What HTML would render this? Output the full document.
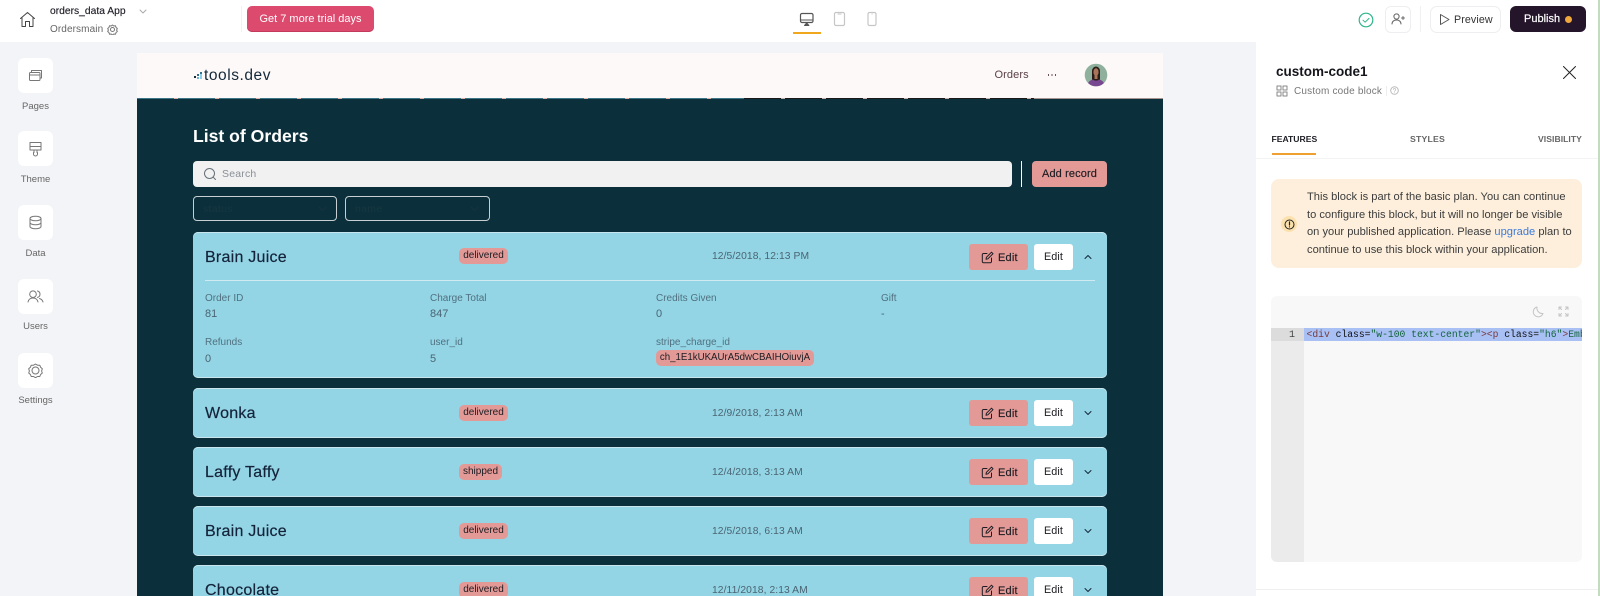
<!DOCTYPE html>
<html style="overflow:hidden"><head><meta charset="utf-8"><title>orders_data App</title>
<style>
html,body{margin:0;padding:0;width:1600px;height:596px;overflow:hidden}
body{position:relative;background:#f3f4f7;font-family:"Liberation Sans",sans-serif;color:#1a2230}
div,svg{position:absolute}
#root{left:0;top:0;width:1600px;height:596px;overflow:hidden;background:#f3f4f7}
.t{position:absolute;white-space:nowrap;line-height:16px;height:16px}
svg{fill:none;stroke:#555;stroke-width:1;stroke-linecap:round;stroke-linejoin:round}
.box{left:18px;width:35px;height:35px;background:#fff;border-radius:6px}
.lab{left:0;width:71px;text-align:center;font-size:9.5px;color:#666}
.card{left:193px;width:914px;height:50px;background:#93d5e5;border-radius:5px;box-shadow:inset 0 1px 0 #c9e6ee,inset 0 -1px 0 #c9e6ee}
.name{left:12px;top:18px;font-size:16px;letter-spacing:.25px;color:#14233a;-webkit-text-stroke:.2px #14233a}
.badge{top:17px;height:16px;background:#e39a97;border-radius:5px;font-size:10px;line-height:16px;color:#1c1c22;text-align:center;white-space:nowrap}
.date{top:18px;left:519px;font-size:10.3px;color:#4b6472;letter-spacing:.08px}
.b1{left:776px;top:12px;width:59px;height:26px;background:#e39a97;border-radius:3px}
.b1 span{position:absolute;left:29px;top:5.5px;font-size:11px;line-height:16px;letter-spacing:.2px;color:#1c1c22;-webkit-text-stroke:.15px #1c1c22}
.b2{left:841px;top:12px;width:39px;height:26px;background:#fff;border-radius:3px;text-align:center;font-size:10.8px;line-height:27px;letter-spacing:.1px;color:#1c1c22}
.k{font-size:10px;color:#51707f}
.v{font-size:11px;color:#4b6472}
.al{left:1307px;font-size:11.13px;color:#3c3c3c}
</style></head><body>
<div id="root">

<!-- top bar -->
<div style="left:0;top:0;width:1600px;height:41.5px;background:#fff"></div>
<svg style="left:19px;top:11px" width="17" height="17" viewBox="0 0 17 17"><path d="M1.5 7.5 8.5 1.5l7 6M3 6.5V15.5H6.5V10.5H10.5V15.5H14V6.5" stroke="#444"/></svg>
<div class="t" style="left:50px;top:4px;font-size:10.3px;color:#1f1f28;-webkit-text-stroke:.15px #1f1f28">orders_data App</div>
<svg style="left:139px;top:9px" width="8" height="5" viewBox="0 0 8 5"><path d="M1 1l3 3 3-3" stroke="#aaa"/></svg>
<div class="t" style="left:50px;top:22px;font-size:10px;color:#666;letter-spacing:.1px">Ordersmain</div>
<svg style="left:107px;top:24px" width="11" height="11" viewBox="0 0 11 11"><circle cx="5.5" cy="5.5" r="2" stroke="#777"/><path d="M5.5 1l1.3 1 1.7-.2.5 1.6 1.3 1.1-.7 1.5.7 1.5-1.3 1.1-.5 1.6-1.7-.2-1.3 1-1.3-1-1.7.2-.5-1.6L.7 7.5 1.4 6 .7 4.5 2 3.4l.5-1.6 1.7.2z" stroke="#777"/></svg>
<div style="left:241px;top:6px;width:1px;height:26px;background:#f2f2f2"></div>
<div class="t" style="left:247px;top:6px;width:127px;height:26px;background:#dc4a6e;border-radius:5px;box-shadow:inset 0 -1px 0 #c23a5c;color:#fff;font-size:11px;line-height:26px;text-align:center">Get 7 more trial days</div>

<svg style="left:799px;top:12px" width="16" height="15" viewBox="0 0 16 15"><rect x="1.5" y="1.5" width="12.5" height="9" rx="1.5" stroke="#555" stroke-width="1.2"/><path d="M1.5 8h12.500" stroke="#555"/><path d="M5.5 13.5l2.200-2.500 2.200 2.500z" fill="#555" stroke="#555"/></svg>
<div style="left:793px;top:32px;width:28px;height:1.5px;background:#f0a71e"></div>
<svg style="left:833px;top:11px" width="14" height="16" viewBox="0 0 14 16"><rect x="1.5" y="1.5" width="10" height="13" rx="1.5" stroke="#c6c6c6" stroke-width="1.2"/><path d="M5 3h3" stroke="#c6c6c6"/></svg>
<svg style="left:866px;top:11px" width="12" height="16" viewBox="0 0 12 16"><rect x="2" y="1.5" width="8" height="13" rx="1.5" stroke="#c6c6c6" stroke-width="1.2"/><path d="M6 3h.2" stroke="#c6c6c6"/></svg>

<svg style="left:1358px;top:11.5px" width="16" height="16" viewBox="0 0 16 16"><circle cx="8" cy="8" r="6.8" stroke="#2fb58a" stroke-width="1.2"/><path d="M5 8.200l2.100 2 3.900-3.800" stroke="#2fb58a"/></svg>
<div style="left:1385px;top:6px;width:24px;height:25px;border:1px solid #eeeef0;border-radius:6px"></div>
<svg style="left:1391px;top:13px" width="14" height="12" viewBox="0 0 14 12"><circle cx="5.5" cy="3.5" r="2.6" stroke="#666"/><path d="M1 11c0-2.500 2-4 4.500-4s4.500 1.500 4.500 4M10.500 5h3M12 3.500v3" stroke="#666"/></svg>
<div style="left:1420px;top:6px;width:1px;height:26px;background:#f0f0f0"></div>
<div style="left:1430px;top:6px;width:69px;height:25px;border:1px solid #eeeef0;border-radius:7px"></div>
<svg style="left:1439px;top:13px" width="12" height="13" viewBox="0 0 12 13"><path d="M1.5 1.500v10l8.500-5z" stroke="#555"/></svg>
<div class="t" style="left:1454px;top:11.5px;font-size:10.7px;color:#333;letter-spacing:.1px">Preview</div>
<div style="left:1510px;top:6px;width:76px;height:26px;background:#24152b;border-radius:6px"></div>
<div class="t" style="left:1524px;top:11px;font-size:11px;color:#fff;-webkit-text-stroke:.2px #fff">Publish</div>
<div style="left:1565px;top:16px;width:7px;height:7px;border-radius:50%;background:#f0a83c"></div>

<!-- left sidebar -->
<div class="box" style="top:58px"></div>
<svg style="left:28px;top:68px" width="15" height="15" viewBox="0 0 15 15"><rect x="1.5" y="4.500" width="10.500" height="8" rx="1" stroke="#777"/><path d="M1.500 7h10.500M3.500 4.500V2.500h10v7.500h-1.500" stroke="#777"/></svg>
<div class="t lab" style="top:98.5px">Pages</div>
<div class="box" style="top:131px"></div>
<svg style="left:28px;top:141px" width="15" height="16" viewBox="0 0 15 16"><path d="M2 1.500h11v7.500H2zM2 5.500h11M6 9v2.500h-.5V13a2 2 0 0 0 4 0v-1.500H9V9" stroke="#777"/></svg>
<div class="t lab" style="top:172px">Theme</div>
<div class="box" style="top:205px"></div>
<svg style="left:28px;top:215px" width="15" height="15" viewBox="0 0 15 15"><ellipse cx="7.500" cy="3.500" rx="5.500" ry="2.300" stroke="#777"/><path d="M2 3.500v8c0 1.300 2.500 2.300 5.500 2.300s5.500-1 5.500-2.300v-8M2 7.500c0 1.300 2.500 2.300 5.500 2.300s5.500-1 5.500-2.300" stroke="#777"/></svg>
<div class="t lab" style="top:246px">Data</div>
<div class="box" style="top:279px"></div>
<svg style="left:27px;top:290px" width="17" height="13" viewBox="0 0 17 13"><circle cx="6" cy="4.200" r="3.300" stroke="#777"/><path d="M1 12c.5-2.500 2.500-4 5-4s4.500 1.500 5 4M10.500 1a3.300 3.300 0 0 1 0 6.400M12.500 8.500c1.700.5 3 1.800 3.500 3.500" stroke="#777"/></svg>
<div class="t lab" style="top:319px">Users</div>
<div class="box" style="top:353px"></div>
<svg style="left:28px;top:363px" width="15" height="15" viewBox="0 0 15 15"><circle cx="7.500" cy="7.500" r="3.500" stroke="#777"/><path d="M7.500 1l2 1.200 2.300 0 .8 2.100 1.700 1.500-.7 2.200.7 2-1.700 1.500-.8 2-2.300 0-2 1.200-2-1.200-2.300 0-.8-2-1.700-1.500.7-2-.7-2.200 1.700-1.500.8-2.100 2.300 0z" stroke="#777"/></svg>
<div class="t lab" style="top:393px">Settings</div>

<!-- canvas -->
<div style="left:137px;top:53px;width:1026px;height:543px;background:#0b303c"></div>
<div style="left:137px;top:53px;width:1026px;height:45px;background:#fdf9f8"></div>
<div style="left:137px;top:97.7px;width:1026px;height:1px;background:repeating-linear-gradient(90deg,#3c7585 0 37px,#e0b0a8 37px 41px)"></div>
<div style="left:744px;top:97.7px;width:290px;height:1px;background:repeating-linear-gradient(90deg,#1a1a1a 0 37px,#c8b0aa 37px 41px)"></div>
<div style="left:1034px;top:97.7px;width:129px;height:1px;background:#a89490"></div>
<div style="left:193.5px;top:76px;width:2px;height:2px;background:#14283a"></div>
<div style="left:197px;top:74px;width:2px;height:2px;background:#2e6f92"></div>
<div style="left:197px;top:76.5px;width:2px;height:2px;background:#6ab6d6"></div>
<div style="left:200px;top:71.5px;width:2px;height:2px;background:#2e6f92"></div>
<div style="left:200px;top:74px;width:2px;height:4.5px;background:#8bd0e8"></div>
<div class="t" style="left:204px;top:67.5px;font-size:15.5px;color:#14283a;letter-spacing:.55px">tools.dev</div>
<div class="t" style="left:994.5px;top:67px;font-size:11px;color:#5a4048;letter-spacing:.1px">Orders</div>
<div style="left:1047.5px;top:74px;width:1.5px;height:1.5px;background:#6a5058;box-shadow:3.5px 0 #6a5058,7px 0 #6a5058"></div>
<svg style="left:1084px;top:63px;stroke:none" width="24" height="24" viewBox="0 0 24 24"><defs><clipPath id="av"><circle cx="12" cy="12" r="11.3"/></clipPath></defs><g clip-path="url(#av)" stroke="none"><rect width="24" height="24" fill="#8fb09c"/><path d="M8 18V8a4 4.500 0 0 1 8 0v10z" fill="#2a1d18"/><ellipse cx="12" cy="9" rx="2.600" ry="3.800" fill="#a9745a"/><path d="M10.500 12h3v4h-3z" fill="#a9745a"/><path d="M3 24c0-4 3-7 6-7.500 1 1.500 5 1.500 6 0 3 .5 6 3.500 6 7.500z" fill="#77488f"/></g></svg>

<div class="t" style="left:193px;top:126px;height:20px;line-height:20px;font-size:17.6px;font-weight:bold;color:#fff">List of Orders</div>
<div style="left:193px;top:161px;width:819px;height:26px;background:#f1f1f1;border-radius:4px"></div>
<svg style="left:203px;top:167px" width="14" height="14" viewBox="0 0 14 14"><circle cx="6.500" cy="6.500" r="5" stroke="#66707a"/><path d="M10.200 10.200l2.300 2.300" stroke="#66707a"/></svg>
<div class="t" style="left:222px;top:166px;font-size:10.5px;color:#8a8f96;letter-spacing:.2px">Search</div>
<div style="left:1021px;top:161px;width:1px;height:26px;background:#fff"></div>
<div class="t" style="left:1032px;top:161px;width:75px;height:26px;background:#e39a97;border-radius:4px;font-size:11px;line-height:26px;letter-spacing:.12px;text-align:center;color:#1c1c22;-webkit-text-stroke:.15px #1c1c22">Add record</div>
<div style="left:193px;top:196px;width:142px;height:23px;border:1px solid #c7cfd2;border-radius:4px"></div>
<div class="t" style="left:203px;top:201px;font-size:10.5px;color:#173640;letter-spacing:.3px">status</div>
<svg style="left:318px;top:206px" width="9" height="6" viewBox="0 0 9 6"><path d="M1 1l3.500 3.500L8 1" stroke="#16333e"/></svg>
<div style="left:345px;top:196px;width:143px;height:23px;border:1px solid #c7cfd2;border-radius:4px"></div>
<div class="t" style="left:355px;top:201px;font-size:10.5px;color:#173640;letter-spacing:.3px">name</div>
<svg style="left:470px;top:206px" width="9" height="6" viewBox="0 0 9 6"><path d="M1 1l3.500 3.500L8 1" stroke="#16333e"/></svg>

<!-- card 1 -->
<div class="card" style="top:232px;height:146px">
  <div class="t name" style="top:17.5px">Brain Juice</div>
  <div class="badge" style="left:266px;width:49px;top:16px">delivered</div>
  <div class="t date" style="top:17px">12/5/2018, 12:13 PM</div>
  <div class="b1"><svg style="left:12px;top:7px" width="13" height="13" viewBox="0 0 13 13"><path d="M6 2.500H2.500a1.200 1.200 0 0 0-1.200 1.200v6.800a1.200 1.200 0 0 0 1.200 1.200h6.800a1.200 1.200 0 0 0 1.200-1.200V7M5 8.300l.4-2L10.500 1.200l1.500 1.500L6.900 7.800z" stroke="#1c1c22"/></svg><span>Edit</span></div>
  <div class="b2">Edit</div>
  <svg style="left:891px;top:22px" width="8" height="6" viewBox="0 0 8 6"><path d="M1 4.500l3-3 3 3" stroke="#14283a"/></svg>
  <div style="left:12px;top:47.5px;width:890px;height:1px;background:#cfeaf1"></div>
  <div class="t k" style="left:12px;top:58.5px">Order ID</div><div class="t v" style="left:12px;top:74px">81</div>
  <div class="t k" style="left:237px;top:58.5px">Charge Total</div><div class="t v" style="left:237px;top:74px">847</div>
  <div class="t k" style="left:463px;top:58.5px">Credits Given</div><div class="t v" style="left:463px;top:74px">0</div>
  <div class="t k" style="left:688px;top:58.5px">Gift</div><div class="t v" style="left:688px;top:74px">-</div>
  <div class="t k" style="left:12px;top:103px">Refunds</div><div class="t v" style="left:12px;top:119px">0</div>
  <div class="t k" style="left:237px;top:103px">user_id</div><div class="t v" style="left:237px;top:119px">5</div>
  <div class="t k" style="left:463px;top:103px">stripe_charge_id</div>
  <div class="badge" style="left:463px;top:118px;width:158px;font-size:9.7px">ch_1E1kUKAUrA5dwCBAIHOiuvjA</div>
</div>

<!-- card 2 -->
<div class="card" style="top:388px">
  <div class="t name">Wonka</div>
  <div class="badge" style="left:266px;width:49px">delivered</div>
  <div class="t date">12/9/2018, 2:13 AM</div>
  <div class="b1"><svg style="left:12px;top:7px" width="13" height="13" viewBox="0 0 13 13"><path d="M6 2.500H2.500a1.200 1.200 0 0 0-1.200 1.200v6.800a1.200 1.200 0 0 0 1.200 1.200h6.800a1.200 1.200 0 0 0 1.200-1.200V7M5 8.300l.4-2L10.500 1.200l1.500 1.500L6.900 7.800z" stroke="#1c1c22"/></svg><span>Edit</span></div>
  <div class="b2">Edit</div>
  <svg style="left:891px;top:22px" width="8" height="6" viewBox="0 0 8 6"><path d="M1 1.500l3 3 3-3" stroke="#14283a"/></svg>
</div>

<!-- card 3 -->
<div class="card" style="top:447px">
  <div class="t name">Laffy Taffy</div>
  <div class="badge" style="left:266px;width:43px">shipped</div>
  <div class="t date">12/4/2018, 3:13 AM</div>
  <div class="b1"><svg style="left:12px;top:7px" width="13" height="13" viewBox="0 0 13 13"><path d="M6 2.500H2.500a1.200 1.200 0 0 0-1.200 1.200v6.800a1.200 1.200 0 0 0 1.200 1.200h6.800a1.200 1.200 0 0 0 1.200-1.200V7M5 8.300l.4-2L10.500 1.200l1.500 1.500L6.900 7.800z" stroke="#1c1c22"/></svg><span>Edit</span></div>
  <div class="b2">Edit</div>
  <svg style="left:891px;top:22px" width="8" height="6" viewBox="0 0 8 6"><path d="M1 1.500l3 3 3-3" stroke="#14283a"/></svg>
</div>

<!-- card 4 -->
<div class="card" style="top:506px">
  <div class="t name">Brain Juice</div>
  <div class="badge" style="left:266px;width:49px">delivered</div>
  <div class="t date">12/5/2018, 6:13 AM</div>
  <div class="b1"><svg style="left:12px;top:7px" width="13" height="13" viewBox="0 0 13 13"><path d="M6 2.500H2.500a1.200 1.200 0 0 0-1.200 1.200v6.800a1.200 1.200 0 0 0 1.200 1.200h6.800a1.200 1.200 0 0 0 1.200-1.200V7M5 8.300l.4-2L10.500 1.200l1.500 1.500L6.900 7.800z" stroke="#1c1c22"/></svg><span>Edit</span></div>
  <div class="b2">Edit</div>
  <svg style="left:891px;top:22px" width="8" height="6" viewBox="0 0 8 6"><path d="M1 1.500l3 3 3-3" stroke="#14283a"/></svg>
</div>

<!-- card 5 -->
<div class="card" style="top:565px">
  <div class="t name">Chocolate</div>
  <div class="badge" style="left:266px;width:49px">delivered</div>
  <div class="t date">12/11/2018, 2:13 AM</div>
  <div class="b1"><svg style="left:12px;top:7px" width="13" height="13" viewBox="0 0 13 13"><path d="M6 2.500H2.500a1.200 1.200 0 0 0-1.200 1.200v6.800a1.200 1.200 0 0 0 1.200 1.200h6.800a1.200 1.200 0 0 0 1.200-1.200V7M5 8.300l.4-2L10.500 1.200l1.500 1.500L6.900 7.800z" stroke="#1c1c22"/></svg><span>Edit</span></div>
  <div class="b2">Edit</div>
  <svg style="left:891px;top:22px" width="8" height="6" viewBox="0 0 8 6"><path d="M1 1.500l3 3 3-3" stroke="#14283a"/></svg>
</div>

<!-- right panel -->
<div style="left:1256px;top:41.5px;width:342px;height:555px;background:#fff"></div>
<div style="left:1598px;top:0;width:2px;height:596px;background:#c3dcc0"></div>
<div class="t" style="left:1276px;top:64px;font-size:13.5px;font-weight:bold;color:#15151c">custom-code1</div>
<svg style="left:1276px;top:85px" width="12" height="12" viewBox="0 0 12 12"><path d="M1 1h4v4H1zM7 1h4v4H7zM1 7h4v4H1zM7 7h4v4H7z" stroke="#888"/></svg>
<div class="t" style="left:1294px;top:83.5px;font-size:10px;color:#777;letter-spacing:.18px">Custom code block</div>
<div style="left:1386px;top:86px;width:1px;height:10px;background:#eee"></div>
<svg style="left:1390px;top:86px" width="9" height="9" viewBox="0 0 9 9"><circle cx="4.500" cy="4.500" r="3.800" stroke="#bbb"/><path d="M3.300 3.600a1.200 1.200 0 1 1 1.700 1.100L4.500 5.400M4.500 6.500v.1" stroke="#bbb" stroke-width=".7"/></svg>
<svg style="left:1562px;top:65px" width="15" height="15" viewBox="0 0 15 15"><path d="M1.500 1.500l12 12M13.500 1.500l-12 12" stroke="#222"/></svg>
<div class="t" style="left:1271.5px;top:131px;font-size:8.6px;font-weight:bold;color:#1d1d24">FEATURES</div>
<div class="t" style="left:1410px;top:131px;font-size:8.7px;font-weight:bold;color:#666;letter-spacing:.2px">STYLES</div>
<div class="t" style="left:1538px;top:131px;font-size:8.6px;font-weight:bold;color:#666;letter-spacing:.05px">VISIBILITY</div>
<div style="left:1256px;top:158px;width:342px;height:1px;background:#f3f3f4"></div>
<div style="left:1272px;top:153px;width:44px;height:2px;background:#f0a030"></div>

<div style="left:1271px;top:179px;width:311px;height:89px;background:#fdefdc;border-radius:8px"></div>
<div style="left:1281px;top:216px;width:16px;height:16px;border-radius:50%;background:#fbe1ad"></div>
<svg style="left:1283.5px;top:218.5px" width="11" height="11" viewBox="0 0 11 11"><circle cx="5.500" cy="5.500" r="4.500" stroke="#222"/><path d="M5.500 3v3M5.500 7.800v.1" stroke="#222" stroke-width="1.2"/></svg>
<div class="t al" style="top:189px">This block is part of the basic plan. You can continue</div>
<div class="t al" style="top:207px">to configure this block, but it will no longer be visible</div>
<div class="t al" style="top:224px">on your published application. Please <span style="color:#3b7ad9">upgrade</span> plan to</div>
<div class="t al" style="top:242px">continue to use this block within your application.</div>

<div style="left:1271px;top:296px;width:311px;height:266px;background:#f8f8f8;border-radius:6px;overflow:hidden">
  <div style="left:0;top:32px;width:33px;height:234px;background:#ebebeb"></div>
  <div style="left:0;top:32px;width:33px;height:13px;background:#dcdcdc"></div>
  <div style="left:33px;top:32px;width:278px;height:13px;background:#a9c0f5"></div>
  <div class="t" style="left:0;top:31.5px;width:24px;text-align:right;font:10px/16px 'Liberation Mono',monospace;color:#444">1</div>
  <div class="t" style="left:35.5px;top:31px;width:275.5px;overflow:hidden;font:9.7px/16px 'Liberation Mono',monospace;color:#111"><span style="color:#7a3a3a">&lt;div</span> class=<span style="color:#14643c">"w-100 text-center"</span><span style="color:#7a3a3a">&gt;&lt;p</span> class=<span style="color:#14643c">"h6"</span><span style="color:#7a3a3a">&gt;</span><span style="color:#14643c">Emb</span></div>
</div>
<svg style="left:1532px;top:306px" width="12" height="12" viewBox="0 0 12 12"><path d="M5 1a5 5 0 1 0 6 6.500A5.500 5.500 0 0 1 5 1z" stroke="#c4c4c4"/></svg>
<svg style="left:1558px;top:306px" width="11" height="11" viewBox="0 0 11 11"><path d="M1 3.500V1h2.500M7.500 1H10v2.500M10 7.500V10H7.500M3.500 10H1V7.500M1 1l2.500 2.500M10 1L7.500 3.500M10 10L7.500 7.500M1 10l2.500-2.500" stroke="#c4c4c4"/></svg>
<div style="left:1256px;top:589px;width:342px;height:1px;background:#f0f0f1"></div>
</div>
</body></html>
